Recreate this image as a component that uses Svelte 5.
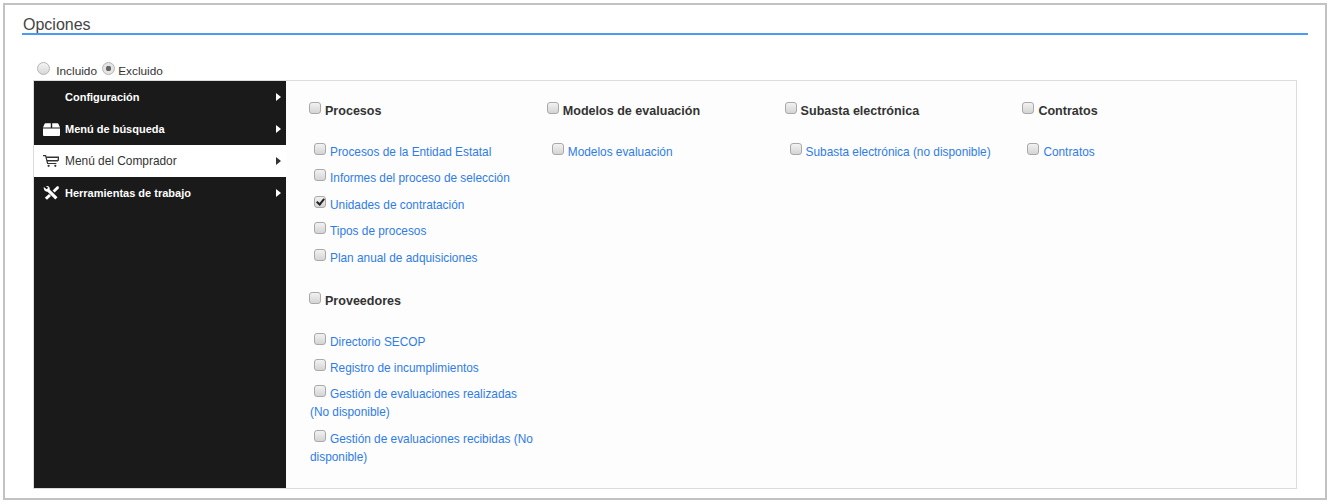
<script>
  const menu = [
    { label: "Configuración", icon: "" },
    { label: "Menú de búsqueda", icon: "box" },
    { label: "Menú del Comprador", icon: "cart", active: true },
    { label: "Herramientas de trabajo", icon: "tools" },
  ];

  const columns = [
    [
      {
        title: "Procesos",
        items: [
          "Procesos de la Entidad Estatal",
          "Informes del proceso de selección",
          "Unidades de contratación",
          "Tipos de procesos",
          "Plan anual de adquisiciones",
        ],
      },
      {
        title: "Proveedores",
        items: [
          "Directorio SECOP",
          "Registro de incumplimientos",
          "Gestión de evaluaciones realizadas (No disponible)",
          "Gestión de evaluaciones recibidas (No disponible)",
        ],
      },
    ],
    [{ title: "Modelos de evaluación", items: ["Modelos evaluación"] }],
    [{ title: "Subasta electrónica", items: ["Subasta electrónica (no disponible)"] }],
    [{ title: "Contratos", items: ["Contratos"] }],
  ];

  const checked = ["Unidades de contratación"];
</script>

<div class="frame">
  <h2>Opciones</h2>

  <div class="scope">
    <label><input type="radio" name="scope" /> Incluido</label>
    <label><input type="radio" name="scope" checked /> Excluido</label>
  </div>

  <div class="panel">
    <nav class="sidebar">
      {#each menu as entry}
        <div class="entry" class:active={entry.active}>
          <span class="icon">
            {#if entry.icon === "box"}
              <svg viewBox="0 0 17 13" width="17" height="13">
                <path d="M0 4.500 1.500 1Q1.800 .2 2.700 .2H7.800V4.500zM9.200 .2h5.100q.9 0 1.200 .8L17 4.500H9.200zM0 5.500h17V12a1 1 0 0 1-1 1H1a1 1 0 0 1-1-1z" fill="currentColor" />
              </svg>
            {:else if entry.icon === "cart"}
              <svg viewBox="0 0 16 12" width="16" height="12" fill="none" stroke="currentColor">
                <path d="M0 .7h2.600l2 7.800h8.800" stroke-width="1.200" />
                <path d="M3.200 2.300H16M3.800 5.800h11.400M15.700 2.300l-.7 3.500" stroke-width="1.400" />
                <circle cx="5.600" cy="10.800" r="1.100" fill="currentColor" stroke="none" />
                <circle cx="12.300" cy="10.800" r="1.100" fill="currentColor" stroke="none" />
              </svg>
            {:else if entry.icon === "tools"}
              <svg viewBox="0 0 16 14" width="16" height="14">
                <path d="M.8 .9 3.600 3.300 5.300 1.700 2.800 0C5.200-.5 7.200 1.200 6.700 3.500l7.800 7.800-2.200 2.200-7.800-7.800C2.200 6.200.3 3.900.8 .9z" fill="currentColor" />
                <path d="M15.500 .3 16 2.200l-4.400 4.400-2-2L14 .2zM6 8l2 2-4 3.700-2.200-2z" fill="currentColor" />
              </svg>
            {/if}
          </span>
          <span class="name">{entry.label}</span>
          <span class="arrow"></span>
        </div>
      {/each}
    </nav>

    <div class="columns">
      {#each columns as groups}
        <div class="column">
          {#each groups as group}
            <h4><input class="box" type="checkbox" />{group.title}</h4>
            <ul>
              {#each group.items as item}
                <li><input class="box" type="checkbox" checked={checked.includes(item)} /><a href="#top">{item}</a></li>
              {/each}
            </ul>
          {/each}
        </div>
      {/each}
    </div>
  </div>
</div>

<style>
  :global(body) {
    margin: 0;
    background: #fff;
    font-family: "Liberation Sans", Arial, sans-serif;
  }

  .frame {
    box-sizing: border-box;
    width: 1324px;
    height: 497px;
    margin: 3px 0 0 3px;
    padding: 0 17px;
    border: 2px solid #c2c2c2;
  }

  h2 {
    margin: 0;
    height: 28px;
    padding-left: 1px;
    border-bottom: 2px solid #4a9cf2;
    font-size: 16px;
    font-weight: 400;
    line-height: 40px;
    color: #444;
    box-sizing: content-box;
  }

  .scope {
    display: flex;
    gap: 5px;
    height: 18px;
    margin: 27px 0 0 15px;
    font-size: 11.800px;
    line-height: 18px;
    color: #333;
  }

  .scope input {
    appearance: none;
    width: 13px;
    height: 13px;
    margin: 0 3px 0 0;
    border: 1px solid #b5b5b5;
    border-radius: 50%;
    background: linear-gradient(#f4f4f4, #d8d8d8);
    vertical-align: 0;
  }

  .scope label + label input {
    margin-right: 0;
  }

  .scope input:checked {
    background: radial-gradient(circle, #666 0 2.500px, #e4e4e4 3px);
  }

  .panel {
    display: flex;
    box-sizing: border-box;
    height: 409px;
    margin: 0 11px;
    border: 1px solid #dcdcdc;
    background: #fdfdfd;
  }

  .sidebar {
    flex: 0 0 252px;
    background: #1a1a1a;
  }

  .entry {
    display: flex;
    align-items: center;
    height: 32px;
    padding: 0 5px 0 9px;
    font-size: 11px;
    font-weight: 700;
    color: #fff;
  }

  .entry.active {
    background: #fff;
    font-size: 11.900px;
    font-weight: 400;
    color: #333;
  }

  .icon {
    display: flex;
    width: 18px;
    margin-right: 4px;
  }

  .name {
    flex: 1;
  }

  .arrow {
    width: 0;
    height: 0;
    border-left: 5px solid currentColor;
    border-top: 4.500px solid transparent;
    border-bottom: 4.500px solid transparent;
  }

  .columns {
    display: grid;
    grid-template-columns: repeat(4, 225px);
    column-gap: 12.800px;
    align-content: start;
    padding: 21px 0 0 23px;
  }

  h4 {
    margin: 0 0 23px;
    font-size: 12.550px;
    line-height: 18px;
    font-weight: 700;
    color: #333;
  }

  h4 .box {
    margin-top: -1px;
    margin-bottom: 1px;
  }

  ul {
    list-style: none;
    margin: 0 0 25px;
    padding: 0;
  }

  li {
    margin-bottom: 8.400px;
    padding-left: 1px;
    font-size: 11.850px;
    line-height: 18px;
    text-indent: 4px;
  }

  li .box {
    margin-top: -1px;
    margin-bottom: 1px;
  }

  a {
    color: #2f7ce6;
    text-decoration: none;
  }

  .box {
    appearance: none;
    position: relative;
    width: 12px;
    height: 12px;
    margin-right: 4px;
    margin-left: 0;
    border: 1px solid #a9a9a9;
    border-radius: 3px;
    background: linear-gradient(#f2f2f2, #d4d4d4);
  }

  .box:checked::after {
    content: "";
    position: absolute;
    left: 3px;
    top: 0;
    width: 3px;
    height: 6px;
    border: solid #222;
    border-width: 0 2px 2px 0;
    transform: rotate(40deg);
  }
</style>
